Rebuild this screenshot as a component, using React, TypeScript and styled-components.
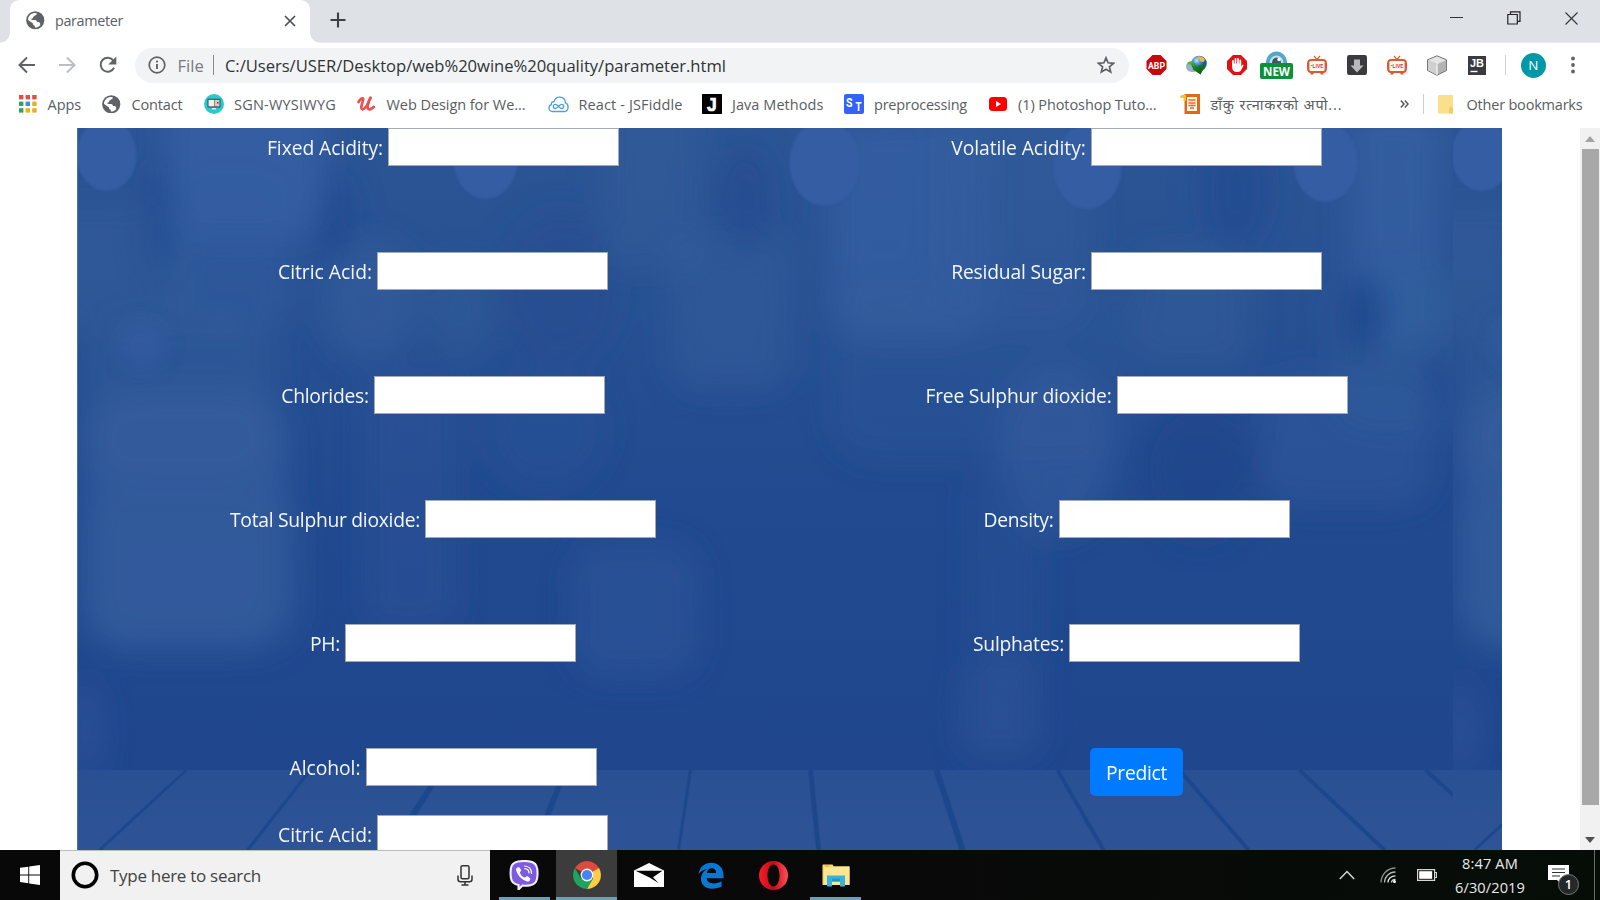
import React, { useLayoutEffect, useRef, useState } from "react";
import styled, { createGlobalStyle } from "styled-components";

const GlobalStyle = createGlobalStyle`
  * { box-sizing: border-box; }
  html, body { margin: 0; padding: 0; overflow: hidden; background: #fff; }
  body { font-family: "Open Sans", "Noto Sans", "Liberation Sans", sans-serif; }
  svg { display: block; flex: none; }
`;

/* ---------- text set to a given advance width ---------- */

const FitBox = styled.span<{ $w: number }>`
  display: block;
  flex: none;
  width: ${(p) => p.$w}px;
  white-space: nowrap;
`;

function Fit({ w, children }: { w: number; children: string }) {
  const ref = useRef<HTMLSpanElement>(null);
  const [spacing, setSpacing] = useState(0);
  useLayoutEffect(() => {
    if (!ref.current) return;
    const natural = ref.current.getBoundingClientRect().width;
    setSpacing((w - natural) / Math.max(1, Array.from(children).length));
  }, []);
  return (
    <FitBox $w={w}>
      <span ref={ref} style={{ letterSpacing: `${spacing}px` }}>{children}</span>
    </FitBox>
  );
}

/* ---------- window ---------- */

const Screen = styled.div`
  width: 1600px;
  height: 900px;
  display: flex;
  flex-direction: column;
  overflow: hidden;
  background: #fff;
`;

const TabStrip = styled.div`
  height: 43px;
  flex: none;
  display: flex;
  background: #dee1e6;
  padding-left: 10px;
  border-bottom: 1px solid #e9ebee;
`;

const Tab = styled.div`
  position: relative;
  width: 300px;
  height: 43px;
  background: #fff;
  border-radius: 9px 9px 0 0;
  display: flex;
  align-items: center;
  padding: 0 14px 2px 16px;
  font-size: 14.4px;
  color: #5c6064;
  &::before, &::after {
    content: "";
    position: absolute;
    bottom: 0;
    width: 10px;
    height: 10px;
  }
  &::before { left: -10px; background: radial-gradient(circle at 0 0, transparent 9.5px, #fff 10px); }
  &::after { right: -10px; background: radial-gradient(circle at 100% 0, transparent 9.5px, #fff 10px); }
`;

const TabTitle = styled.div`
  margin-left: 10.500px;
  flex: 1;
`;

const NewTab = styled.div`
  width: 55px;
  display: flex;
  align-items: center;
  justify-content: center;
  padding-bottom: 2px;
`;

const WindowButtons = styled.div`
  margin-left: auto;
  display: flex;
  height: 36px;
  align-items: center;
`;

const WindowButton = styled.div<{ $raise?: boolean }>`
  width: 57.3px;
  display: flex;
  justify-content: center;
  padding-bottom: ${(p) => (p.$raise ? 2 : 0)}px;
`;

const Toolbar = styled.div`
  height: 44px;
  flex: none;
  display: flex;
  align-items: center;
  padding-left: 7px;
`;

const NavButton = styled.div`
  width: 40.3px;
  display: flex;
  justify-content: center;
  padding-bottom: 1px;
`;

const Omnibox = styled.div`
  width: 993.5px;
  height: 35px;
  margin-left: 7.5px;
  border-radius: 18px;
  background: #f1f3f4;
  display: flex;
  align-items: center;
  padding: 0 14px 0 13px;
  font-size: 16.6px;
  color: #303336;
`;

const Scheme = styled.div`
  margin-left: 11px;
  color: #777b80;
`;

const OmniSeparator = styled.div`
  width: 1px;
  height: 20px;
  margin: 0 10.5px 0 9.5px;
  background: #888c90;
`;

const OmniStar = styled.div`
  margin-left: auto;
`;

const Extensions = styled.div`
  display: flex;
  margin-left: 7.5px;
`;

const Extension = styled.div`
  width: 40.1px;
  height: 40px;
  display: flex;
  align-items: center;
  justify-content: center;
`;

const ToolbarSeparator = styled.div<{ $before?: number; $after: number }>`
  width: 1px;
  height: 20px;
  flex: none;
  margin: 0 ${(p) => p.$after}px 0 ${(p) => p.$before ?? 8}px;
  background: #ccd0d4;
`;

const Avatar = styled.div`
  width: 25px;
  height: 25px;
  border-radius: 50%;
  background: #0097a7;
  color: #fff;
  font-size: 13.5px;
  line-height: 25px;
  text-align: center;
`;

const Menu = styled.div`
  margin-left: 25px;
`;

const BookmarkBar = styled.div`
  height: 41px;
  flex: none;
  display: flex;
  align-items: center;
  padding: 0 0 7px 17.6px;
  font-size: 14.5px;
  color: #5a5d61;
`;

const Bookmark = styled.div<{ $after: number }>`
  display: flex;
  align-items: center;
  gap: 10px;
  flex: none;
  margin-right: ${(p) => p.$after}px;
`;

const BookmarkIcon = styled.div`
  width: 20px;
  height: 20px;
  display: flex;
  align-items: center;
  justify-content: center;
`;

/* ---------- page ---------- */

const Viewport = styled.div`
  height: 722px;
  flex: none;
  display: flex;
  overflow: hidden;
`;

const PageArea = styled.div`
  flex: 1;
  padding-left: 77px;
  overflow: hidden;
`;

const FormPanel = styled.div`
  position: relative;
  width: 1425px;
  height: 722px;
  overflow: hidden;
  background: #22498f;
  border-left: 1px solid #4e70aa;
`;

const Backdrop = styled.svg`
  position: absolute;
  inset: 0;
`;

const FormGrid = styled.form`
  position: relative;
  display: grid;
  grid-template-columns: 729px 658px;
  grid-template-rows: 124.4px repeat(4, 123.8px) 67.3px 60px;
  margin: 0;
  padding-left: 0.5px;
  color: #f3f6fb;
  font-size: 19.3px;
  line-height: 39.5px;
`;

const Field = styled.label`
  display: flex;
  justify-content: center;
  align-items: flex-start;
  gap: 5px;
`;

const Input = styled.input`
  width: 231px;
  height: 38px;
  border: 1px solid #a3a9b5;
  border-radius: 0;
  background: #fff;
  padding: 0;
  margin: 0;
`;

const ButtonCell = styled.div`
  display: flex;
  justify-content: center;
`;

const PredictButton = styled.button`
  width: 93px;
  height: 48px;
  border: 0;
  border-radius: 5px;
  background: #007bff;
  color: #fff;
  font: 19.3px "Open Sans", sans-serif;
  padding: 1px 16px 0;
`;

const ScrollTrack = styled.div`
  width: 20px;
  flex: none;
  background: #f1f1f1;
  display: flex;
  flex-direction: column;
  align-items: center;
`;

const ScrollArrow = styled.div`
  height: 21px;
  display: flex;
  align-items: center;
`;

const ScrollThumb = styled.div`
  width: 17px;
  height: 656px;
  background: #a8a8a8;
  margin-bottom: auto;
`;

/* ---------- taskbar ---------- */

const Taskbar = styled.div`
  height: 50px;
  flex: none;
  display: flex;
  background: linear-gradient(90deg, #080808 0, #090909 55%, #060d07 100%);
`;

const StartButton = styled.div`
  width: 60px;
  display: flex;
  align-items: center;
  justify-content: center;
`;

const SearchBox = styled.div`
  width: 430px;
  border-top: 1px solid #bdbdbd;
  background: #f1f1f1;
  display: flex;
  align-items: center;
  padding: 0 17px 1px 11px;
  font-size: 17px;
  color: #424242;
`;

const SearchText = styled.div`
  margin-left: 11px;
  padding-top: 1px;
  flex: 1;
`;

const TaskButton = styled.div<{ $active?: boolean; $running?: boolean }>`
  width: ${(p) => (p.$active ? 61 : 51)}px;
  margin: 0 ${(p) => (p.$active ? 0.5 : 5.7)}px;
  padding-top: 3px;
  display: flex;
  align-items: center;
  justify-content: center;
  background: ${(p) => (p.$active ? "#3c3c3c" : "transparent")};
  border-bottom: 3px solid ${(p) => (p.$active || p.$running ? "#6c9fb8" : "transparent")};
`;

const TaskList = styled.div`
  display: flex;
  margin-left: 3.3px;
`;

const Tray = styled.div`
  margin-left: auto;
  display: flex;
  align-items: center;
`;

const Clock = styled.div`
  margin-left: 18px;
  width: 70px;
  padding-top: 1px;
  display: flex;
  flex-direction: column;
  align-items: center;
  font-size: 14.6px;
  line-height: 23.4px;
  color: #e8eae8;
`;

const Notifications = styled.div`
  position: relative;
  margin-left: 23px;
  width: 46px;
  height: 50px;
  padding-top: 15px;
`;

const NotificationCount = styled.div`
  position: absolute;
  left: 10px;
  top: 24px;
  width: 21px;
  height: 21px;
  border-radius: 50%;
  border: 1.5px solid #777a78;
  background: #252826;
  color: #fff;
  font-size: 13px;
  font-weight: 600;
  line-height: 18px;
  text-align: center;
`;

const DesktopEdge = styled.div`
  width: 6px;
  height: 50px;
  border-left: 1px solid #6b6e6c;
`;

/* ---------- icons ---------- */

const Globe = () => (
  <svg width="18.5" height="18.5" viewBox="0 0 20 20">
    <circle cx="10" cy="10" r="9.8" fill="#5f6368" />
    <path d="M2.200 9.800C2.200 5.500 5.300 2.600 9 2.200L11.600 2.300C11.800 3.800 11 4.300 9.800 4.700 9.300 5.700 8.700 6 7.800 6.200 8 7.600 7 8.300 6 8.400V9.600H9.800C11.300 9.700 11.900 10.700 11.900 12H13.300C14.900 12.200 15.500 13.300 15.300 15.300 13.500 17.400 11.700 17.900 9.500 17.800V15.900C8 15.800 7.600 14.800 7.600 13.600L2.200 9.800z" fill="#fff" />
    <path d="M2.200 10.500L7.600 14v1.500c0 1 .7 1.500 1.400 1.600v.9C5 17.600 2.100 14.500 2.200 10.500z" fill="#5f6368" />
    <path d="M14.200 3.400c1.600 1 2.800 2.500 3.300 4.200l-1.800.9-2.200-.8.3-1.700 1-.5z" fill="#5f6368" />
  </svg>
);

const CloseTab = () => (
  <svg width="12" height="12" viewBox="0 0 12 12" stroke="#4c5054" strokeWidth="1.7"><path d="M1 1l10 10M11 1L1 11" /></svg>
);
const Plus = () => (
  <svg width="16" height="16" viewBox="0 0 16 16" stroke="#3c4043" strokeWidth="2.1"><path d="M8 .5v15M.5 8h15" /></svg>
);
const Arrow = ({ flip, color }: { flip?: boolean; color: string }) => (
  <svg width="18" height="18" viewBox="0 0 18 18" fill="none" stroke={color} strokeWidth="2">
    <path d={flip ? "M1 9h15M9 1.500L16.500 9 9 16.500" : "M17 9H2M9 1.500L1.500 9 9 16.500"} />
  </svg>
);
const Reload = () => (
  <svg width="20" height="20" viewBox="0 0 20 20" fill="none">
    <path d="M16.100 12.600A7 7 0 1 1 15.400 5.600" stroke="#5f6368" strokeWidth="2" />
    <path d="M18.300 1.500v8h-8z" fill="#5f6368" />
  </svg>
);
const Info = () => (
  <svg width="18" height="18" viewBox="0 0 18 18">
    <circle cx="9" cy="9" r="7.800" fill="none" stroke="#5f6368" strokeWidth="1.700" />
    <path d="M9 8v5" stroke="#5f6368" strokeWidth="1.900" /><circle cx="9" cy="5.600" r="1.100" fill="#5f6368" />
  </svg>
);
const Star = () => (
  <svg width="18" height="18" viewBox="0 0 18 18">
    <path d="M9 1.800l2.100 5 5.400.5-4.100 3.500 1.300 5.300L9 13.300 4.300 16.100l1.300-5.300-4.100-3.500 5.400-.5z" fill="none" stroke="#5f6368" strokeWidth="1.700" />
  </svg>
);

const octagon = "M6 0h8l6 6v8l-6 6H6l-6-6V6z";

const Abp = () => (
  <svg width="21" height="20" viewBox="0 0 20 20">
    <path d={octagon} fill="#c8080c" />
    <text x="10" y="13.500" fontSize="9.800" fontWeight="700" fill="#fff" textAnchor="middle" fontFamily="Roboto, sans-serif" textLength="17" lengthAdjust="spacingAndGlyphs">ABP</text>
  </svg>
);
const DownloadGlobe = () => (
  <svg width="21" height="20" viewBox="0 0 21 20">
    <defs>
      <radialGradient id="idm" cx=".35" cy=".3"><stop offset="0" stopColor="#c4e2f3" /><stop offset=".5" stopColor="#4b93d4" /><stop offset="1" stopColor="#1d55a0" /></radialGradient>
      <linearGradient id="idg" x1="0" y1="0" x2="1" y2="1"><stop offset="0" stopColor="#6cc244" /><stop offset=".5" stopColor="#127c1c" /><stop offset="1" stopColor="#05500d" /></linearGradient>
    </defs>
    <ellipse cx="6.500" cy="11.500" rx="6.500" ry="5.500" fill="#90b5bd" />
    <circle cx="13" cy="8.500" r="7.800" fill="url(#idm)" />
    <path d="M12 1.200c3 0 5.500 1 7 3.300L17.500 7l-3-.5-1-2.500-2.500-.3z" fill="#e8bd3c" />
    <path d="M1.500 7.500C4 5.500 8 6.500 10.500 11L20 9.200 14.500 19.500 6.500 14.200 8.200 13.200C6.500 10 4.500 8.800 1.500 9.500z" fill="url(#idg)" />
  </svg>
);
const Hand = () => (
  <svg width="20" height="20" viewBox="0 0 20 20">
    <path d={octagon} fill="#e01216" />
    <path d="M6 11V6M8.500 10V3.900M11 10V3.900M13.300 10V5.500" stroke="#fff" strokeWidth="1.800" strokeLinecap="round" />
    <path d="M5.100 10.500V8.500h9.100v3l1-1.600c.8-.5 1.500.1 1.200.9l-2.400 4.400c-.6 1.200-1.600 1.700-3 1.700H9.400C6.500 16.900 5.100 15 5.100 12z" fill="#fff" />
  </svg>
);
const NewBadge = () => (
  <svg width="33" height="28" viewBox="0 0 33 28">
    <path d="M6 12a10.500 11.500 0 0 1 21 0z" fill="#55a6cc" />
    <path d="M9.500 12a7 7.500 0 0 1 14 0z" fill="#bfe0ef" />
    <path d="M12 12a4.500 5.500 0 0 1 9 0z" fill="#43545e" /><circle cx="19" cy="8.500" r="1.700" fill="#fff" />
    <rect x="0" y="12" width="33" height="16" rx="2" fill="#0c9138" />
    <text x="16.500" y="24.700" fontSize="12.500" fontWeight="700" fill="#fff" textAnchor="middle" fontFamily="Open Sans, sans-serif" textLength="27" lengthAdjust="spacingAndGlyphs">NEW</text>
  </svg>
);
const LiveTv = () => (
  <svg width="20" height="20" viewBox="0 0 20 20">
    <path d="M7 .8l3 3.700L13 .8" stroke="#e2572c" strokeWidth="1.200" fill="none" />
    <rect x="1.300" y="5" width="17.400" height="12" rx="2.500" fill="#fff" stroke="#e2572c" strokeWidth="2.200" />
    <path d="M.6 8v6M19.400 8v6" stroke="#e2572c" strokeWidth="1.200" />
    <path d="M4 17.500l-.8 2h3l.8-2zM13 17.500l.8 2h3l-.8-2z" fill="#e2572c" />
    <text x="10" y="13.300" fontSize="5.800" fontWeight="700" fill="#e03a20" textAnchor="middle" fontFamily="Roboto, sans-serif" textLength="12.500" lengthAdjust="spacingAndGlyphs">•LIVE</text>
  </svg>
);
const DownloadBox = () => (
  <svg width="20" height="20" viewBox="0 0 20 20">
    <rect width="20" height="20" rx="2.200" fill="#3b3b3d" />
    <path d="M7 4.500h6v6h3.500L10 17.500 3.500 10.500H7z" fill="#b9b9b9" />
  </svg>
);
const Cube = () => (
  <svg width="22" height="21" viewBox="0 0 22 21">
    <path d="M11 .8l9.500 4v10.700L11 20.300 1.500 15.500V4.800z" fill="#b3b3b3" stroke="#777" />
    <path d="M11 1.500l9 3.700-9 4-9-4z" fill="#e4e4e4" /><path d="M2 5.400l9 4v10.400l-9-4.500z" fill="#d0d0d0" /><path d="M11 9.200v10.500" stroke="#eee" strokeWidth="1.500" />
  </svg>
);
const JetBrains = () => (
  <svg width="18" height="19" viewBox="0 0 18 19">
    <rect width="18" height="19" fill="#3b3b3f" />
    <text x="9" y="10.500" fontSize="11" fontWeight="700" fill="#fff" textAnchor="middle" fontFamily="Liberation Sans, sans-serif" textLength="14" lengthAdjust="spacingAndGlyphs">JB</text>
    <path d="M2.500 15.500h7" stroke="#fff" strokeWidth="1.400" />
  </svg>
);

const AppsGrid = () => {
  const colors = ["#dd5144", "#dd5144", "#dd5144", "#33a05f", "#3d8af0", "#f0ae1c", "#33a05f", "#f0ae1c", "#f0ae1c"];
  return (
    <svg width="18" height="18" viewBox="0 0 18 18">
      {colors.map((c, i) => <rect key={i} x={(i % 3) * 6.600} y={Math.floor(i / 3) * 6.600} width="4.400" height="4.400" fill={c} />)}
    </svg>
  );
};
const Monitor = () => (
  <svg width="20" height="20" viewBox="0 0 20 20">
    <circle cx="10" cy="10" r="10" fill="#2cc8ce" />
    <rect x="3.500" y="4.800" width="13" height="8.800" rx=".8" fill="#37474f" /><rect x="4.500" y="5.800" width="5.500" height="6.600" fill="#f5efe9" /><rect x="10.500" y="5.800" width="5" height="6.600" fill="#dcc9c3" />
    <rect x="13" y="8" width="1.500" height="1.500" fill="#37474f" /><path d="M8 14h4v1.500H8z" fill="#e7e7e7" />
  </svg>
);
const UdemyMark = () => (
  <svg width="18" height="16" viewBox="0 0 18 16" fill="none" stroke="#ea5252" strokeLinecap="round" strokeLinejoin="round">
    <path d="M1.500 6C3 3.500 5 2 6 2.500 7.400 3.200 3.400 9.500 4.400 12.200 5.300 15.100 9 12 11.700 6.500" strokeWidth="2.700" />
    <path d="M13.500 1.800C11.800 5 9.800 10.500 11 12.600 12 14.200 14.500 13 16.700 11" strokeWidth="2.900" />
  </svg>
);
const Fiddle = () => (
  <svg width="21" height="17" viewBox="0 0 21 17" fill="none" stroke="#529fe0">
    <path d="M5 15.500C2.500 15.500 1 14 1 12c0-1.700 1-2.900 2.300-3.300C3 6.500 4.300 5.500 6 5.800 7 2.600 9.400 1 12 1.200c3.400.3 5.300 2.600 5.400 5.700 1.800.7 2.700 2 2.700 4 0 2.700-1.600 4.600-4.200 4.600z" strokeWidth="1.300" />
    <path d="M10.500 10.300C9.300 8.900 8.500 8.300 7.400 8.300a2 2 0 0 0 0 4.200c2 0 4.200-4.200 6.200-4.200a2 2 0 0 1 0 4.200c-1.100 0-1.900-.7-3.100-2.200z" strokeWidth="1.300" />
  </svg>
);
const LetterJ = () => (
  <svg width="20" height="20" viewBox="0 0 20 20">
    <rect width="20" height="20" fill="#000" />
    <text x="5" y="17" fontSize="17.500" fontWeight="700" fill="#fff" stroke="#fff" strokeWidth=".7" fontFamily="Liberation Sans, sans-serif">J</text>
  </svg>
);
const StMark = () => (
  <svg width="20" height="20" viewBox="0 0 20 20">
    <rect width="20" height="20" rx="2" fill="#3563fa" />
    <text x="2" y="13" fontSize="12" fontWeight="700" fill="#fff" fontFamily="Roboto, sans-serif" textLength="6.500" lengthAdjust="spacingAndGlyphs">S</text>
    <text x="11.500" y="17" fontSize="12" fontWeight="700" fill="#fff" fontFamily="Roboto, sans-serif" textLength="6" lengthAdjust="spacingAndGlyphs">T</text>
  </svg>
);
const Video = () => (
  <svg width="18" height="14" viewBox="0 0 18 14"><rect width="18" height="14" rx="3.500" fill="#f00" /><path d="M7 4v6l5-3z" fill="#fff" /></svg>
);
const Scroll = () => (
  <svg width="20" height="20" viewBox="0 0 20 20">
    <path d="M4.500 0H20v20H4.500z" fill="#dc6a1b" /><path d="M7 3h10v14H7z" fill="#fff3e2" />
    <path d="M0 2.500C1.500.5 4 .8 6 .8V7H3.500V3.500L1 4z" fill="#f4bd35" />
    <path d="M8.500 6h7M8.500 9h7M8.500 11.500h7M10 14h4" stroke="#e26b27" strokeWidth="1.400" />
  </svg>
);
const FolderPage = () => (
  <svg width="16" height="19" viewBox="0 0 16 19">
    <rect width="15" height="18.500" rx="1" fill="#fbe08b" /><path d="M11 18.500v-4.500c0-2.500 4-2.500 4 0v4.500z" fill="#f1cd5f" />
  </svg>
);

const Viber = () => (
  <svg width="30" height="30" viewBox="0 0 30 30">
    <path d="M9 1.500C14 .7 17.500.8 21.500 1.600c4 .8 6 3 6.700 7 .5 3.500.5 7-.2 10.300-.8 3.700-2.900 5.600-6.600 6.300-2.900.6-5.500.6-8 .4L9.500 29.500V25C5 24.200 2.500 22 1.900 17.800 1.500 14.800 1.400 11.500 2 8 2.700 4 5 2.200 9 1.500z" fill="#7d5ae0" stroke="#f2effc" strokeWidth="2.100" />
    <path d="M9 7.300c1.200-.7 3 2 3.100 3 .1 1-1.300 1.500-1.200 2.500.8 2.200 2.400 3.900 4.600 4.700.9.300 1.300-1.400 2.500-1.300 1.100.1 3.700 2 3.400 3-.6 1.800-2.100 2.600-3.500 2.200C12.300 19.500 8.300 15 7 9.700c-.2-1 .9-1.900 2-2.400z" fill="#fff" />
    <path d="M15.500 6c4.200.2 7 2.900 7 7.300M15.800 8.700c2.500.2 4 1.700 4.200 4.200" fill="none" stroke="#fff" strokeWidth="1.200" strokeLinecap="round" />
  </svg>
);
const Chrome = () => (
  <svg width="28" height="28" viewBox="0 0 28 28">
    <path d="M14 14L1.900 7A14 14 0 0 1 26.100 7z" fill="#dc4b3e" />
    <path d="M1.900 7A14 14 0 0 0 14 28L20 17.500 8 17.500z" fill="#1fa35e" />
    <path d="M26.100 7A14 14 0 0 1 14 28L20 17.500 17 7z" fill="#fdce45" />
    <path d="M14 7h12.100L14 14z" fill="#dc4b3e" />
    <circle cx="14" cy="14" r="6.400" fill="#f4f4f4" /><circle cx="14" cy="14" r="5.100" fill="#4685f3" />
  </svg>
);
const Mail = () => (
  <svg width="30" height="24" viewBox="0 0 30 24">
    <path d="M0 7.500L15 0l15 7.500V24H0z" fill="#fff" /><path d="M1.500 7.800h27L19 14.300l5.500 5.700-9-5.500z" fill="#050505" />
  </svg>
);
const Edge = () => (
  <svg width="26" height="27" viewBox="0 0 26 27">
    <path d="M.5 12.300C1.700 4.700 6.800.7 13.300.7c7.400 0 12.200 5 12.200 12.700v2.900H8.700c.3 3.500 3 5.100 6.900 5.100 3 0 5.500-.8 8-2.200v5.400c-2.700 1.500-6 2.100-9.500 2.100C7 26.700 2.800 22.500 3 16.500c.2-4.300 2.700-7.600 6.600-9.400C6 7.300 2.900 9.200.5 12.300zM8.900 11h9.200c-.1-3.200-1.700-4.700-4.300-4.700-2.700 0-4.500 1.900-4.900 4.700z" fill="#0878d4" />
  </svg>
);
const Opera = () => (
  <svg width="29" height="29" viewBox="0 0 29 29">
    <defs><linearGradient id="op"><stop offset="0" stopColor="#f41e2c" /><stop offset=".5" stopColor="#c50817" /><stop offset="1" stopColor="#ff5255" /></linearGradient></defs>
    <path fillRule="evenodd" d="M14.500 0a14.500 14.500 0 1 0 0 29 14.500 14.500 0 1 0 0-29zM14.500 3.600c3.500 0 6 4.700 6 10.900s-2.500 10.900-6 10.900-6-4.700-6-10.900 2.500-10.900 6-10.900z" fill="url(#op)" />
  </svg>
);
const Explorer = () => (
  <svg width="28" height="23" viewBox="0 0 28 23">
    <path d="M.5 3V1.500c0-.6.4-1 1-1h9l1.500 2h15.500V21H.5z" fill="#f9d86d" /><path d="M2 3.500h9l1-1h15.500V21H2z" fill="#fde692" />
    <path d="M5 22.500V11.500h18v11h-5v-5h-8v5z" fill="#39b3de" /><path d="M10 14.500h8v3h-8z" fill="#2596c2" /><path d="M3 2h4" stroke="#eba733" />
  </svg>
);

/* ---------- page backdrop: bokeh wall above a plank floor ---------- */

type Blob = [cx: number, cy: number, rx: number, ry: number, fill: string, opacity: number, boxy?: boolean];

const haze: Blob[] = [
  [245, 150, 78, 90, "#355fa5", 0.85, true], [230, 250, 60, 80, "#335e9f", 0.5, true], [105, 270, 80, 65, "#32609b", 0.45, true],
  [180, 400, 95, 80, "#345e9c", 0.5, true], [185, 520, 102, 130, "#36609f", 0.65, true], [190, 570, 110, 80, "#365f9e", 0.3, true],
  [370, 300, 48, 60, "#38609f", 0.5], [460, 310, 34, 50, "#34609d", 0.35],
  [410, 500, 45, 130, "#32569b", 0.4, true], [635, 610, 62, 66, "#31569a", 0.55, true], [650, 180, 50, 90, "#33609a", 0.45, true],
  [730, 310, 60, 80, "#33609d", 0.45, true], [545, 430, 60, 60, "#2e579a", 0.35], [910, 230, 80, 110, "#3761a5", 0.65, true],
  [1010, 200, 80, 130, "#335e9e", 0.45, true], [980, 370, 150, 90, "#335b9a", 0.3, true], [1055, 450, 60, 85, "#36609f", 0.5],
  [1190, 310, 60, 60, "#36609c", 0.45, true], [1345, 440, 85, 65, "#32599d", 0.5, true], [1395, 230, 45, 120, "#3762a5", 0.6, true],
  [1410, 350, 80, 80, "#32609d", 0.35, true], [1000, 710, 38, 46, "#32569a", 0.5, true], [1005, 580, 36, 100, "#2e5499", 0.35, true],
  [85, 730, 16, 50, "#32579d", 0.6],
];
const shade: Blob[] = [
  [158, 220, 16, 60, "#204890", 0.6], [335, 220, 18, 45, "#1f478f", 0.65], [560, 290, 60, 80, "#22498f", 0.4],
  [745, 200, 26, 55, "#20478e", 0.5], [1235, 190, 35, 60, "#22488f", 0.6], [1362, 315, 20, 40, "#1c428a", 0.75],
  [1440, 385, 12, 40, "#1e438a", 0.6], [1200, 470, 60, 70, "#1c438a", 0.6],
];
const lamps = [[106, 155, 30, 36], [485, 160, 32, 39], [824, 163, 35, 43], [1087, 167, 34, 42], [1325, 162, 32, 40]];
const planks = [
  [186, 99, 3], [310, 247, 3], [441, 390, 6], [565, 533, 6], [690, 678, 3], [810, 818, 5], [936, 962, 6], [1057, 1103, 4], [1179, 1248, 4], [1299, 1384, 4], [1425, 1514, 4],
];

const Glow = ({ blob: [cx, cy, rx, ry, fill, opacity, boxy] }: { blob: Blob }) =>
  boxy ? (
    <rect x={cx - rx} y={cy - ry} width={rx * 2} height={ry * 2} rx={Math.min(rx, ry) * 0.5} fill={fill} opacity={opacity} />
  ) : (
    <ellipse cx={cx} cy={cy} rx={rx} ry={ry} fill={fill} opacity={opacity} />
  );

const Scene = () => (
  <g transform="translate(-77.500 -128)">
    <rect x="77" y="128" width="1376" height="722" fill="url(#wall)" />
    <g filter="url(#soft)">
      {haze.map((b, i) => <Glow key={i} blob={b} />)}
      {shade.map((b, i) => <Glow key={i} blob={b} />)}
    </g>
    <g filter="url(#glow)"><circle cx="142" cy="345" r="24" fill="#355da5" opacity=".55" /></g>
    <g filter="url(#edge)">
      {lamps.map(([cx, cy, rx, ry], i) => <ellipse key={i} cx={cx} cy={cy} rx={rx} ry={ry} fill="#355da4" />)}
    </g>
    <rect x="77" y="770" width="1376" height="80" fill="url(#floor)" />
    <g filter="url(#line)">
      {planks.map(([a, b, w], i) => <path key={i} d={`M${a} 770L${b} 850`} stroke="#1f468d" strokeWidth={w} />)}
    </g>
  </g>
);

const Wall = () => (
  <Backdrop width="1425" height="722" viewBox="0 0 1425 722">
    <defs>
      <linearGradient id="wall" x1="0" y1="0" x2="0" y2="1">
        <stop offset="0" stopColor="#2c5596" /><stop offset=".25" stopColor="#285193" /><stop offset=".5" stopColor="#224a90" /><stop offset="1" stopColor="#1f468d" />
      </linearGradient>
      <linearGradient id="floor" x1="0" y1="0" x2="0" y2="1"><stop offset="0" stopColor="#2a5094" /><stop offset=".15" stopColor="#2b5195" /><stop offset="1" stopColor="#2e5497" /></linearGradient>
      <filter id="soft" x="-10%" y="-10%" width="120%" height="120%"><feGaussianBlur stdDeviation="15" /></filter>
      <filter id="glow" x="-50%" y="-50%" width="200%" height="200%"><feGaussianBlur stdDeviation="9" /></filter>
      <filter id="edge" x="-10%" y="-10%" width="120%" height="120%"><feGaussianBlur stdDeviation="1.200" /></filter>
      <filter id="line" x="-10%" y="-10%" width="120%" height="120%"><feGaussianBlur stdDeviation=".7" /></filter>
      <clipPath id="tile"><rect width="1375" height="722" /></clipPath>
    </defs>
    <g clipPath="url(#tile)"><Scene /></g>
    <g transform="translate(1375 0)"><g clipPath="url(#tile)"><Scene /></g></g>
  </Backdrop>
);

/* ---------- data ---------- */

const bookmarks: { icon: React.ReactNode; text: string; w: number; after: number }[] = [
  { icon: <AppsGrid />, text: "Apps", w: 33.5, after: 20.4 },
  { icon: <Globe />, text: "Contact", w: 51, after: 21.5 },
  { icon: <Monitor />, text: "SGN-WYSIWYG", w: 102, after: 20.5 },
  { icon: <UdemyMark />, text: "Web Design for We...", w: 139, after: 23 },
  { icon: <Fiddle />, text: "React - JSFiddle", w: 104, after: 19.5 },
  { icon: <LetterJ />, text: "Java Methods", w: 91.5, after: 20.5 },
  { icon: <StMark />, text: "preprocessing", w: 93, after: 21 },
  { icon: <Video />, text: "(1) Photoshop Tuto...", w: 138.5, after: 24 },
  { icon: <Scroll />, text: "डाँकु रत्नाकरको अपो...", w: 138, after: 51.5 },
];

const fields: [string, number][] = [
  ["Fixed Acidity:", 116], ["Volatile Acidity:", 134.5],
  ["Citric Acid:", 94], ["Residual Sugar:", 134.5],
  ["Chlorides:", 87.5], ["Free Sulphur dioxide:", 186],
  ["Total Sulphur dioxide:", 190], ["Density:", 70],
  ["PH:", 30], ["Sulphates:", 91],
  ["Alcohol:", 71],
];

export default function App() {
  return (
    <Screen>
      <GlobalStyle />
      <TabStrip>
        <Tab>
          <Globe />
          <TabTitle><Fit w={68}>parameter</Fit></TabTitle>
          <CloseTab />
        </Tab>
        <NewTab><Plus /></NewTab>
        <WindowButtons>
          <WindowButton $raise><svg width="13" height="13" viewBox="0 0 13 13" stroke="#333"><path d="M0 6.500h13" /></svg></WindowButton>
          <WindowButton>
            <svg width="14" height="14" viewBox="0 0 14 14" fill="none" stroke="#222" strokeWidth="1.200"><path d="M.8 3.500h9.500v9.500H.8zM3.500 3.500V.8h9.500v9.500h-2.700" /></svg>
          </WindowButton>
          <WindowButton><svg width="13" height="13" viewBox="0 0 13 13" stroke="#333" strokeWidth="1.100"><path d="M.5.5l12 12M12.500.5l-12 12" /></svg></WindowButton>
        </WindowButtons>
      </TabStrip>

      <Toolbar>
        <NavButton><Arrow color="#5f6368" /></NavButton>
        <NavButton><Arrow flip color="#bcbfc2" /></NavButton>
        <NavButton><Reload /></NavButton>
        <Omnibox>
          <Info />
          <Scheme><Fit w={26.5}>File</Fit></Scheme>
          <OmniSeparator />
          <Fit w={501}>C:/Users/USER/Desktop/web%20wine%20quality/parameter.html</Fit>
          <OmniStar><Star /></OmniStar>
        </Omnibox>
        <Extensions>
          {[Abp, DownloadGlobe, Hand].map((Icon, i) => <Extension key={i}><Icon /></Extension>)}
          <Extension><NewBadge /></Extension>
          {[LiveTv, DownloadBox, LiveTv, Cube, JetBrains].map((Icon, i) => <Extension key={i}><Icon /></Extension>)}
        </Extensions>
        <ToolbarSeparator $before={7.5} $after={15} />
        <Avatar>N</Avatar>
        <Menu>
          <svg width="4" height="18" viewBox="0 0 4 18" fill="#5f6368"><circle cx="2" cy="2.500" r="1.900" /><circle cx="2" cy="9" r="1.900" /><circle cx="2" cy="15.500" r="1.900" /></svg>
        </Menu>
      </Toolbar>

      <BookmarkBar>
        {bookmarks.map((b) => (
          <Bookmark key={b.text} $after={b.after}>
            <BookmarkIcon>{b.icon}</BookmarkIcon>
            <Fit w={b.w}>{b.text}</Fit>
          </Bookmark>
        ))}
        <svg width="9" height="8" viewBox="0 0 9 8" fill="none" stroke="#55595d" strokeWidth="1.500"><path d="M.8.6L4 4 .8 7.400M4.800.6L8 4 4.800 7.400" /></svg>
        <ToolbarSeparator $before={14} $after={12.5} />
        <Bookmark $after={0}>
          <BookmarkIcon><FolderPage /></BookmarkIcon>
          <Fit w={116}>Other bookmarks</Fit>
        </Bookmark>
      </BookmarkBar>

      <Viewport>
        <PageArea>
          <FormPanel>
            <Wall />
            <FormGrid>
              {fields.map(([name, w]) => (
                <Field key={name}><Fit w={w}>{name}</Fit><Input /></Field>
              ))}
              <ButtonCell><PredictButton type="button"><Fit w={61}>Predict</Fit></PredictButton></ButtonCell>
              <Field><Fit w={94}>Citric Acid:</Fit><Input /></Field>
            </FormGrid>
          </FormPanel>
        </PageArea>
        <ScrollTrack>
          <ScrollArrow><svg width="10" height="6" viewBox="0 0 10 6"><path d="M5 0l5 6H0z" fill="#a3a3a3" /></svg></ScrollArrow>
          <ScrollThumb />
          <ScrollArrow><svg width="10" height="6" viewBox="0 0 10 6"><path d="M0 0h10L5 6z" fill="#505050" /></svg></ScrollArrow>
        </ScrollTrack>
      </Viewport>

      <Taskbar>
        <StartButton>
          <svg width="20" height="20" viewBox="0 0 20 20" fill="#fff"><path d="M0 2.800l8.300-1.100v7.800H0zM9.200 1.600L20 0v9.500H9.200zM0 10.400h8.300v7.900L0 17.100zM9.200 10.400H20V20L9.200 18.400z" /></svg>
        </StartButton>
        <SearchBox>
          <svg width="28" height="28" viewBox="0 0 28 28"><circle cx="14" cy="14" r="11.700" fill="none" stroke="#000" strokeWidth="3.600" /></svg>
          <SearchText><Fit w={151}>Type here to search</Fit></SearchText>
          <svg width="16" height="21" viewBox="0 0 16 21" fill="none" stroke="#333" strokeWidth="1.500"><rect x="4" y=".8" width="8" height="13" rx="1.500" /><path d="M1 10.500v3.800c0 1.500 1 2.500 2.500 2.500h9c1.500 0 2.500-1 2.500-2.500v-3.800M8 17v3M4.500 20h7" /></svg>
        </SearchBox>
        <TaskList>
          <TaskButton $running><Viber /></TaskButton>
          <TaskButton $active><Chrome /></TaskButton>
          <TaskButton><Mail /></TaskButton>
          <TaskButton><Edge /></TaskButton>
          <TaskButton><Opera /></TaskButton>
          <TaskButton $running><Explorer /></TaskButton>
        </TaskList>
        <Tray>
          <svg width="16" height="10" viewBox="0 0 16 10" fill="none" stroke="#d5d7d5" strokeWidth="1.500"><path d="M.8 9L8 1.500 15.200 9" /></svg>
          <svg width="62" height="18" viewBox="0 0 62 18" fill="none" stroke="#8a8c8a" strokeWidth="1.300">
            <path d="M26 16.500C26 9 32 2 40.500 2" /><path d="M29.500 16.500C29.500 11 34 6 40.500 6" stroke="#b5b7b5" /><path d="M33 16.500c0-3.500 3-6.700 7.500-6.700M36.500 16.500c0-1.700 1.500-3.200 4-3.200" stroke="#e0e0e0" /><circle cx="39.500" cy="15.500" r="1.500" fill="#fff" stroke="none" />
          </svg>
          <svg width="20" height="12" viewBox="0 0 20 12"><path d="M.6.600h17v10.800H.6z" fill="none" stroke="#d5d5d5" strokeWidth="1.200" /><path d="M2.200 2.200h13v7.600h-13z" fill="#fff" /><path d="M18 3.500h1.500v5H18" fill="none" stroke="#d5d5d5" strokeWidth="1.200" /></svg>
          <Clock>
            <Fit w={56}>8:47 AM</Fit>
            <Fit w={70}>6/30/2019</Fit>
          </Clock>
          <Notifications>
            <svg width="21" height="20" viewBox="0 0 21 20"><path d="M0 0h21v15h-8v4l-4-4H0z" fill="#fff" /><path d="M4 4h13M4 7.500h13M4 11h8" stroke="#333" strokeWidth="1.200" /></svg>
            <NotificationCount>1</NotificationCount>
          </Notifications>
          <DesktopEdge />
        </Tray>
      </Taskbar>
    </Screen>
  );
}
